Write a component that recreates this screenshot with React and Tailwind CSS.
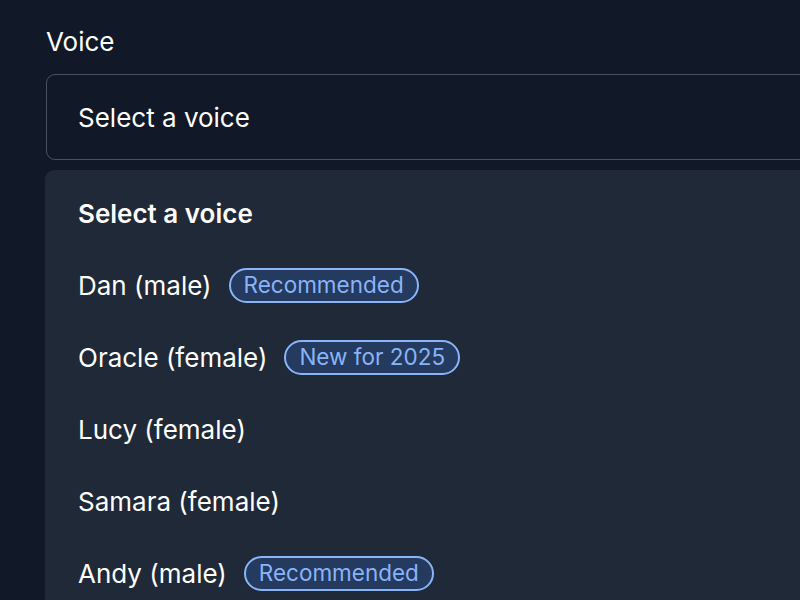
import React from "react";

const voices = [
  { name: "Dan (male)", badge: "Recommended" },
  { name: "Oracle (female)", badge: "New for 2025" },
  { name: "Lucy (female)" },
  { name: "Samara (female)" },
  { name: "Andy (male)", badge: "Recommended" },
];

function Badge({ children }) {
  return (
    <span className="ml-[17px] inline-flex h-[35px] items-center rounded-full border-2 border-[#8ab4f8] bg-[#243a5e] px-[13px] text-[22.5px] leading-none text-[#8ab4f8]">
      {children}
    </span>
  );
}

export default function App() {
  return (
    <div
      className="h-[600px] w-[800px] overflow-hidden bg-[#111827] text-white"
      style={{ fontFamily: "Inter, 'Open Sans', sans-serif" }}
    >
      <div className="pl-[46px] pt-[26px]">
        {/* Label */}
        <div className="h-[48px] text-[26px] leading-[32px]">Voice</div>

        {/* Select trigger */}
        <div className="flex h-[86px] w-[800px] items-center rounded-[9px] border border-[#475263] pt-px pl-[31px] text-[26px]">
          Select a voice
        </div>

        {/* Dropdown */}
        <div className="mt-[10px] -ml-px w-[800px] rounded-[9px] bg-[#1f2937] pt-[7px] pb-[40px]">
          <div className="flex h-[72px] items-center pl-[33px] text-[26px] font-semibold">
            Select a voice
          </div>
          {voices.map((v) => (
            <div key={v.name} className="flex h-[72px] items-center pl-[33px] text-[26px]">
              <span>{v.name}</span>
              {v.badge && <Badge>{v.badge}</Badge>}
            </div>
          ))}
        </div>
      </div>
    </div>
  );
}
